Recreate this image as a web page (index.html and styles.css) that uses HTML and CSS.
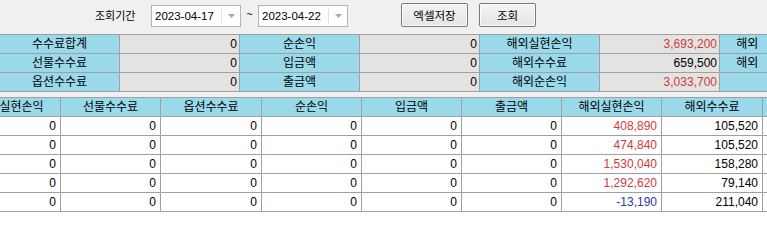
FILE: index.html
```html
<!DOCTYPE html>
<html lang="ko">
<head>
  <meta charset="UTF-8">
  <title>수수료 조회</title>
  <link rel="stylesheet" href="styles.css">
</head>
<body>
  <div class="toolbar">
    <span class="period-label">조회기간</span>
    <div class="date-box">
      <span class="date-text">2023-04-17</span>
      <span class="drop"><svg width="7" height="4" viewBox="0 0 7 4"><path d="M0 0H7L3.5 4Z" fill="#a8a8a8"/></svg></span>
    </div>
    <span class="tilde">~</span>
    <div class="date-box">
      <span class="date-text">2023-04-22</span>
      <span class="drop"><svg width="7" height="4" viewBox="0 0 7 4"><path d="M0 0H7L3.5 4Z" fill="#a8a8a8"/></svg></span>
    </div>
    <button class="btn btn-excel">엑셀저장</button>
    <button class="btn btn-search">조회</button>
  </div>

  <!-- 합계 -->
  <div class="summary-wrap">
    <div class="summary">
      <div class="lbl">수수료합계</div><div class="val">0</div>
      <div class="lbl">순손익</div><div class="val">0</div>
      <div class="lbl">해외실현손익</div><div class="val plus">3,693,200</div>
      <div class="lbl wide">해외 선물순손익</div><div class="val"></div>

      <div class="lbl">선물수수료</div><div class="val">0</div>
      <div class="lbl">입금액</div><div class="val">0</div>
      <div class="lbl">해외수수료</div><div class="val">659,500</div>
      <div class="lbl wide">해외 옵션순손익</div><div class="val"></div>

      <div class="lbl">옵션수수료</div><div class="val">0</div>
      <div class="lbl">출금액</div><div class="val">0</div>
      <div class="lbl">해외순손익</div><div class="val plus">3,033,700</div>
      <div class="lbl"></div><div class="val"></div>
    </div>
  </div>

  <!-- 일별 내역 -->
  <div class="grid-area">
    <div class="grid">
      <div class="th">선물실현손익</div>
      <div class="th">선물수수료</div>
      <div class="th">옵션수수료</div>
      <div class="th">순손익</div>
      <div class="th">입금액</div>
      <div class="th">출금액</div>
      <div class="th">해외실현손익</div>
      <div class="th">해외수수료</div>
      <div class="th">해외순손익</div>

      <div class="td">0</div><div class="td">0</div><div class="td">0</div><div class="td">0</div><div class="td">0</div><div class="td">0</div><div class="td plus">408,890</div><div class="td">105,520</div><div class="td"></div>
      <div class="td">0</div><div class="td">0</div><div class="td">0</div><div class="td">0</div><div class="td">0</div><div class="td">0</div><div class="td plus">474,840</div><div class="td">105,520</div><div class="td"></div>
      <div class="td">0</div><div class="td">0</div><div class="td">0</div><div class="td">0</div><div class="td">0</div><div class="td">0</div><div class="td plus">1,530,040</div><div class="td">158,280</div><div class="td"></div>
      <div class="td">0</div><div class="td">0</div><div class="td">0</div><div class="td">0</div><div class="td">0</div><div class="td">0</div><div class="td plus">1,292,620</div><div class="td">79,140</div><div class="td"></div>
      <div class="td">0</div><div class="td">0</div><div class="td">0</div><div class="td">0</div><div class="td">0</div><div class="td">0</div><div class="td minus">-13,190</div><div class="td">211,040</div><div class="td"></div>
    </div>
  </div>
</body>
</html>
```

FILE: styles.css
```css
html, body {
  margin: 0;
  height: 100%;
}
body {
  background-color: #f0f0f0;
  font-family: "Liberation Sans", "Noto Sans CJK KR", sans-serif;
  font-size: 12px;
  color: #000;
  overflow: hidden;
  display: flex;
  flex-direction: column;
}

/* 상단 조회 바 */
.toolbar {
  height: 34px;
  display: flex;
  align-items: flex-start;
  padding-left: 95px;
  box-sizing: border-box;
  font-size: 11px;
}
.period-label {
  margin-top: 9px;
  line-height: 14px;
  width: 42px;
  margin-right: 14px;
}
.date-box {
  margin-top: 5px;
  width: 90px;
  height: 22px;
  box-sizing: border-box;
  border: 1px solid #b5b5b5;
  background-color: #fff;
  display: flex;
  align-items: center;
  font-size: 11.5px;
}
.date-text {
  flex: 1;
  padding-left: 3px;
}
.drop {
  width: 18px;
  height: 16px;
  border-left: 1px solid #e2e2e2;
  display: flex;
  align-items: center;
  justify-content: center;
}
.tilde {
  margin-top: 8px;
  width: 17px;
  text-align: center;
}
.btn {
  margin-top: 3px;
  height: 24px;
  padding: 0;
  font-family: "Liberation Sans", "Noto Sans CJK KR", sans-serif;
  font-size: 11.5px;
  color: #000;
  border: 1px solid #7a7a7a;
  border-radius: 2px;
  background: linear-gradient(#f4f4f4, #e4e4e4);
  box-shadow: inset 0 0 0 1px #fcfcfc;
}
.btn-excel {
  margin-left: 53px;
  width: 67px;
}
.btn-search {
  margin-left: 11px;
  width: 57px;
}

/* 합계 테이블 */
.summary-wrap {
  overflow: hidden;
}
.summary {
  margin-left: -1px;
  width: 960px;
  display: grid;
  grid-template-columns: repeat(8, 119px);
  grid-auto-rows: 18px;
  gap: 1px;
  padding: 1px;
  background-color: #a0a0a0;
}
.lbl {
  background-color: #99d9ea;
  text-align: center;
  line-height: 18px;
  white-space: nowrap;
  overflow: hidden;
}
.lbl.wide {
  word-spacing: 6px;
}
.val {
  background-color: #e3e3e3;
  text-align: right;
  padding-right: 2px;
  line-height: 18px;
}

/* 일별 그리드 */
.grid-area {
  flex: 1;
  margin-top: 5px;
  background-color: #fff;
  overflow: hidden;
}
.grid {
  margin-left: -40px;
  width: 920px;
  display: grid;
  grid-template-columns: 99px 99px 100px 99px 99px 99px 99px 100px 99px;
  grid-auto-rows: 18px;
  gap: 1px;
  padding: 1px;
  background-color: #a0a0a0;
}
.th {
  background-color: #99d9ea;
  text-align: center;
  line-height: 18px;
  white-space: nowrap;
}
.td {
  background-color: #fff;
  text-align: right;
  padding-right: 4px;
  line-height: 18px;
}
.plus {
  color: #d23a3a;
}
.minus {
  color: #3434a8;
}
```
